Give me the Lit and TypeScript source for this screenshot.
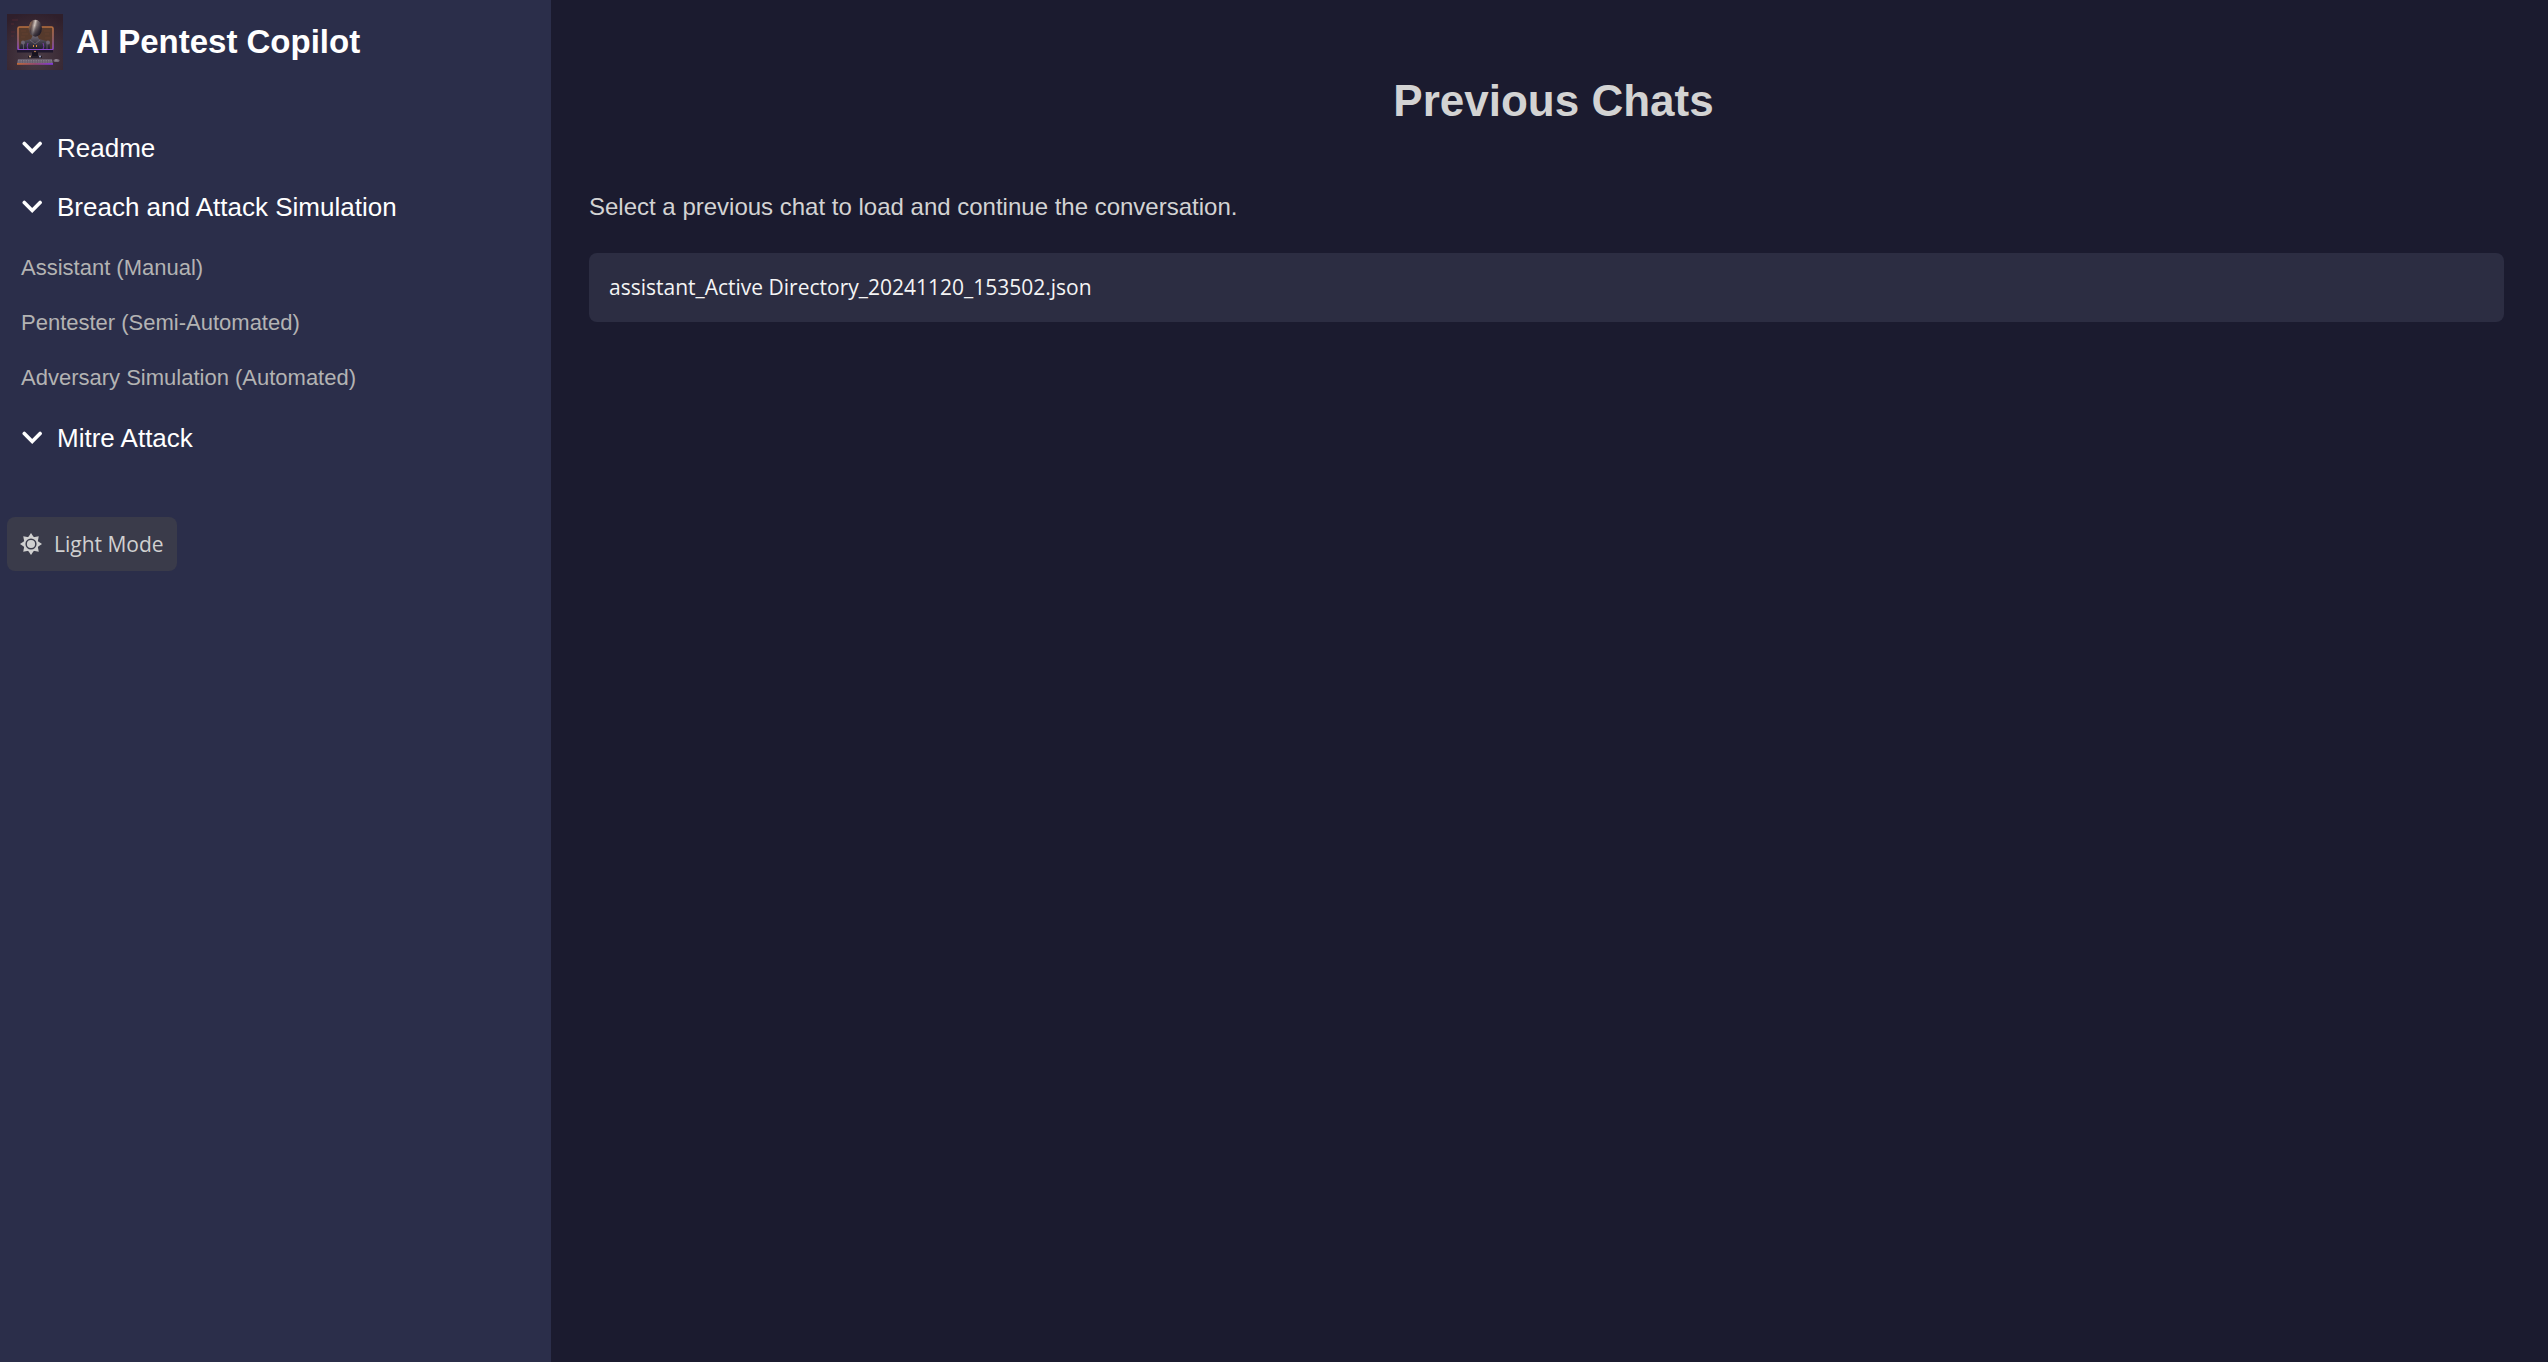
import { LitElement, html, css, svg } from "lit";
import { customElement, property, state } from "lit/decorators.js";

@customElement("robot-logo")
export class RobotLogo extends LitElement {
  static styles = css`
    :host { display: block; flex: none; }
    .art { display: block; width: 56px; height: 56px; }
  `;

  render() {
    return html`
      <svg class="art" viewBox="0 0 56 56" role="img" aria-label="AI Pentest Copilot logo">
        <defs>
          <radialGradient id="bg" cx=".5" cy=".75" r=".8">
            <stop offset="0" stop-color="#4a3c46" /><stop offset=".6" stop-color="#3b2b36" /><stop offset="1" stop-color="#2f1f2b" />
          </radialGradient>
          <linearGradient id="frame" x1="0" y1="0" x2="0" y2="1">
            <stop offset="0" stop-color="#b8703e" /><stop offset=".5" stop-color="#9a6468" /><stop offset="1" stop-color="#8a46cc" />
          </linearGradient>
          <linearGradient id="glow" x1="0" y1="0" x2="1" y2="0">
            <stop offset="0" stop-color="#c06a38" /><stop offset=".5" stop-color="#954a70" /><stop offset="1" stop-color="#8038dc" />
          </linearGradient>
          <linearGradient id="head" x1="0" y1="0" x2="1" y2=".3">
            <stop offset="0" stop-color="#a8703f" /><stop offset=".3" stop-color="#6b5552" /><stop offset=".5" stop-color="#cfc4bd" />
            <stop offset=".65" stop-color="#7b6f70" /><stop offset="1" stop-color="#2a2430" />
          </linearGradient>
          <linearGradient id="shade" x1="0" y1="0" x2="0" y2="1">
            <stop offset=".35" stop-color="#1c1622" stop-opacity="0" /><stop offset="1" stop-color="#1c1622" stop-opacity=".8" />
          </linearGradient>
          <linearGradient id="body" x1="0" y1="0" x2="0" y2="1">
            <stop offset="0" stop-color="#6d6670" /><stop offset=".5" stop-color="#3d3947" /><stop offset="1" stop-color="#1d1a29" />
          </linearGradient>
        </defs>
        <rect width="56" height="56" fill="url(#bg)" />
        <path d="M5 6h6M4 10h3M4 18h4M4 22h3" stroke="#5a2c34" stroke-width=".7" />
        <rect x="11" y="13" width="35" height="23" rx="1.500" fill="#563a2c" stroke="url(#frame)" stroke-width="1.600" />
        <path d="M14 17h5M15 20h6M14 23h4M37 17h6M38 20h4M38 24h5" stroke="#7c4c36" stroke-width=".8" opacity=".4" />
        <path d="M13 36c-.5-5 1-8 4-9l7-2 1.500-3h5l1.500 3 7 2c3 1 4.500 4 4 9z" fill="url(#body)" />
        <path d="M23 26l5 4 5-4M16.500 30v5M40 30v5" fill="none" stroke="#7d7684" stroke-width=".6" />
        <circle cx="16" cy="28.500" r="2" fill="#6c6474" /><circle cx="41" cy="28.500" r="2" fill="#6c6474" />
        <path d="M21 29c-1 3-1 4 0 6M36 29c1 3 1 4 0 6" fill="none" stroke="#7a3fa8" stroke-width="1" />
        <path d="M26.500 31v2M29.500 31v2" stroke="#d98a40" stroke-width="1" />
        <ellipse cx="28.300" cy="14.200" rx="6.600" ry="8.500" fill="url(#head)" />
        <ellipse cx="28.300" cy="14.200" rx="6.600" ry="8.500" fill="url(#shade)" />
        <rect x="10" y="36" width="36" height="2.500" fill="#1f182d" />
        <path d="M11 35.500h34" stroke="#8b48d0" stroke-width="1" />
        <rect x="25" y="38" width="6" height="5" fill="#17131f" /><rect x="21" y="42" width="14" height="2" fill="#241d29" />
        <circle cx="23" cy="42.500" r="1" fill="#d8b183" /><circle cx="33" cy="42.500" r="1" fill="#9ca7c8" /><circle cx="28" cy="37.500" r=".8" fill="#d19055" />
        <path d="M11 45h34l1 4H10z" fill="#665d6c" />
        <path d="M11 46.500h34M11 48h34" stroke="#8f8490" stroke-width=".7" stroke-dasharray="1.500 1" />
        <rect x="10" y="49" width="36" height="1.800" fill="url(#glow)" />
        <ellipse cx="49.500" cy="46.500" rx="3" ry="1.500" fill="#776b7a" /><path d="M48 46h2.500" stroke="#b0a3ad" stroke-width=".7" />
      </svg>
    `;
  }
}

@customElement("nav-section")
export class NavSection extends LitElement {
  @property() label = "";
  @property({ attribute: false }) items: string[] = [];
  @state() private open = true;

  static styles = css`
    :host { display: block; }
    .toggle {
      display: flex; align-items: center; gap: 14px; width: 100%; height: 59px;
      padding: 0 22px; border: 0; background: none; color: #fff; text-align: left;
      font: 26px "Liberation Sans", Arial, sans-serif; cursor: pointer;
    }
    .chevron { flex: none; width: 21px; height: 21px; }
    .closed { transform: rotate(-90deg); }
    .list { list-style: none; margin: 0; padding: 3px 0 4px; }
    .link {
      display: block; padding: 0 21px; line-height: 55px; font-size: 22px;
      color: #b3b3b3; text-decoration: none;
    }
  `;

  render() {
    return html`
      <button class="toggle" aria-expanded=${this.open} @click=${() => (this.open = !this.open)}>
        <svg class="chevron ${this.open ? "" : "closed"}" viewBox="0 0 21 21" aria-hidden="true">
          <path d="M2.300 5.500l7.900 8 7.900-8" fill="none" stroke="#fff" stroke-width="3.600" stroke-linecap="round" />
        </svg>
        ${this.label}
      </button>
      ${this.open && this.items.length
        ? html`<ul class="list">${this.items.map((item) => html`<li><a class="link" href="#">${item}</a></li>`)}</ul>`
        : ""}
    `;
  }
}

@customElement("app-root")
export class AppRoot extends LitElement {
  @property({ attribute: false }) chats = ["assistant_Active Directory_20241120_153502.json"];

  static styles = css`
    :host { display: block; font-family: "Liberation Sans", Arial, sans-serif; }
    .layout { display: flex; min-height: 100vh; background: #1b1b2f; }
    .sidebar { flex: none; width: 551px; background: #2b2e4a; }
    .brand { display: flex; align-items: center; gap: 13px; padding: 14px 7px 0; }
    .name { margin: 0; color: #fff; font-size: 33px; line-height: 56px; font-weight: 700; }
    .nav { padding-top: 49px; }
    .mode {
      display: flex; align-items: center; gap: 12px; height: 54px; margin: 49px 7px 0;
      padding: 0 13px; border: 0; border-radius: 8px; background: #3a3b4a; color: #d0d0d0;
      font: 21px "Open Sans", Tahoma, sans-serif; cursor: pointer;
    }
    .sun { width: 22px; height: 22px; flex: none; }
    .main { flex: 1; min-width: 0; padding: 70px 44px 44px 38px; }
    .title { margin: 0; padding-left: 14px; text-align: center; color: #d3d3d3; font-size: 44px; line-height: 62px; }
    .hint { margin: 57px 0 0; color: #d3d3d3; font-size: 24px; line-height: 36px; }
    .chats { display: flex; flex-direction: column; gap: 14px; list-style: none; margin: 28px 0 0; padding: 0; }
    .chat {
      display: block; width: 100%; height: 69px; padding: 0 20px 2px; border: 0; border-radius: 8px;
      background: #2c2d42; color: #f4f4f4; text-align: left; font: 21px "Open Sans", Tahoma, sans-serif; cursor: pointer;
    }
  `;

  render() {
    const rays = Array.from({ length: 8 }, (_, i) => i * 45);
    return html`
      <div class="layout">
        <aside class="sidebar">
          <header class="brand"><robot-logo></robot-logo><h2 class="name">AI Pentest Copilot</h2></header>
          <nav class="nav">
            <nav-section label="Readme"></nav-section>
            <nav-section
              label="Breach and Attack Simulation"
              .items=${["Assistant (Manual)", "Pentester (Semi-Automated)", "Adversary Simulation (Automated)"]}
            ></nav-section>
            <nav-section label="Mitre Attack"></nav-section>
          </nav>
          <button class="mode">
            <svg class="sun" viewBox="-11 -11 22 22" fill="#d0d0d0" aria-hidden="true">
              ${rays.map((a) => svg`<path d="M-3 -6.500L0 -11L3 -6.500z" transform="rotate(${a})" />`)}
              <circle r="6.600" fill="none" stroke="#d0d0d0" stroke-width="2" />
              <circle r="4.100" />
            </svg>
            Light Mode
          </button>
        </aside>
        <main class="main">
          <h1 class="title">Previous Chats</h1>
          <p class="hint">Select a previous chat to load and continue the conversation.</p>
          <ul class="chats">
            ${this.chats.map((chat) => html`<li><button class="chat">${chat}</button></li>`)}
          </ul>
        </main>
      </div>
    `;
  }
}
